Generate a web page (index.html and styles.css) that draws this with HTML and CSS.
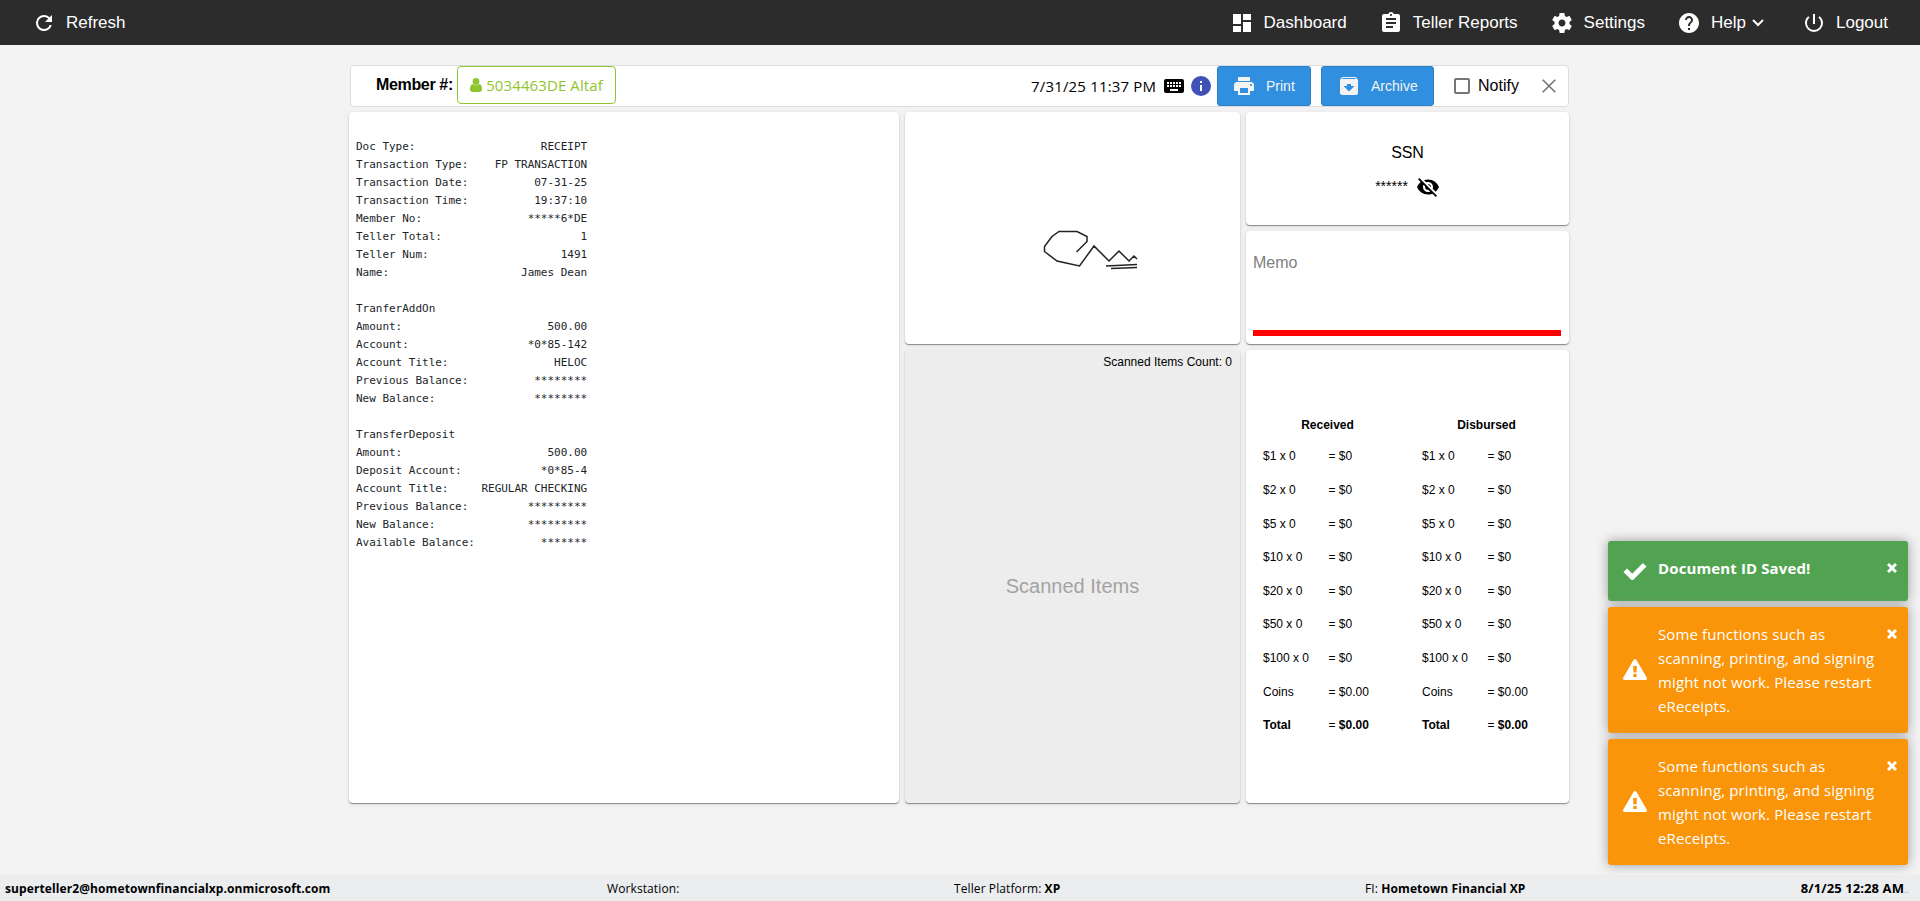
FILE: index.html
```html
<!DOCTYPE html>
<html lang="en">
  <head>
    <meta charset="UTF-8" />
    <meta name="viewport" content="width=device-width, initial-scale=1.0" />
    <title>eReceipts</title>
    <link rel="stylesheet" href="styles.css">
  </head>
  <body>
    <nav class="navbar">
      <a class="nav-item">
        <svg class="icon" viewBox="0 0 24 24"><path d="M17.65 6.35A7.96 7.96 0 0 0 12 4a8 8 0 1 0 7.73 10h-2.08A6 6 0 1 1 12 6c1.66 0 3.14.69 4.22 1.78L13 11h7V4z"/></svg>
        <span>Refresh</span>
      </a>
      <div class="nav-right">
        <a class="nav-item">
          <svg class="icon" viewBox="0 0 24 24"><path d="M3 13h8V3H3v10zm0 8h8v-6H3v6zm10 0h8V11h-8v10zm0-18v6h8V3h-8z"/></svg>
          <span>Dashboard</span>
        </a>
        <a class="nav-item">
          <svg class="icon" viewBox="0 0 24 24"><path d="M19 3h-4.18C14.4 1.84 13.3 1 12 1s-2.4.84-2.82 2H5c-1.1 0-2 .9-2 2v14c0 1.1.9 2 2 2h14c1.1 0 2-.9 2-2V5c0-1.1-.9-2-2-2zm-7 0c.55 0 1 .45 1 1s-.45 1-1 1-1-.45-1-1 .45-1 1-1zm2 14H7v-2h7v2zm3-4H7v-2h10v2zm0-4H7V7h10v2z"/></svg>
          <span>Teller Reports</span>
        </a>
        <a class="nav-item">
          <svg class="icon" viewBox="0 0 24 24"><path d="M19.43 12.98c.04-.32.07-.64.07-.98s-.03-.66-.07-.98l2.11-1.65c.19-.15.24-.42.12-.64l-2-3.46c-.12-.22-.39-.3-.61-.22l-2.49 1c-.52-.4-1.08-.73-1.69-.98l-.38-2.65A.488.488 0 0 0 14 2h-4c-.25 0-.46.18-.49.42l-.38 2.65c-.61.25-1.17.59-1.69.98l-2.49-1c-.23-.09-.49 0-.61.22l-2 3.46c-.13.22-.07.49.12.64l2.11 1.65c-.04.32-.07.65-.07.98s.03.66.07.98l-2.11 1.65c-.19.15-.24.42-.12.64l2 3.46c.12.22.39.3.61.22l2.49-1c.52.4 1.08.73 1.69.98l.38 2.65c.03.24.24.42.49.42h4c.25 0 .46-.18.49-.42l.38-2.65c.61-.25 1.17-.59 1.69-.98l2.49 1c.23.09.49 0 .61-.22l2-3.46c.12-.22.07-.49-.12-.64l-2.11-1.65zM12 15.5c-1.93 0-3.5-1.57-3.5-3.5s1.57-3.5 3.5-3.5 3.5 1.57 3.5 3.5-1.57 3.5-3.5 3.5z"/></svg>
          <span>Settings</span>
        </a>
        <a class="nav-item">
          <svg class="icon" viewBox="0 0 24 24"><path d="M12 2C6.48 2 2 6.48 2 12s4.48 10 10 10 10-4.48 10-10S17.52 2 12 2zm1 17h-2v-2h2v2zm2.07-7.75l-.9.92C13.45 12.9 13 13.5 13 15h-2v-.5c0-1.1.45-2.1 1.17-2.83l1.24-1.26c.37-.36.59-.86.59-1.41 0-1.1-.9-2-2-2s-2 .9-2 2H8c0-2.21 1.79-4 4-4s4 1.79 4 4c0 .88-.36 1.68-.93 2.25z"/></svg>
          <span>Help</span>
          <svg class="chevron" viewBox="0 0 12 8"><path d="M1 1l5 5 5-5"/></svg>
        </a>
        <a class="nav-item nav-logout">
          <svg class="icon" viewBox="0 0 24 24"><path d="M13 3h-2v10h2V3zm4.83 2.17l-1.42 1.42A6.92 6.92 0 0 1 19 12c0 3.87-3.13 7-7 7s-7-3.13-7-7c0-2.18 1.01-4.12 2.58-5.42L6.17 5.17A8.93 8.93 0 0 0 3 12a9 9 0 0 0 18 0c0-2.74-1.23-5.18-3.17-6.83z"/></svg>
          <span>Logout</span>
        </a>
      </div>
    </nav>

    <main class="content">
      <header class="toolbar">
        <label class="member-label">Member #:</label>
        <button class="member-btn">
          <svg class="user-icon" viewBox="0 0 12 14"><circle cx="6" cy="3.4" r="3.4"/><path d="M2.8 5.9A4.4 4.4 0 0 0 9.200 5.900C11.200 6.200 12 8.500 12 11c0 2-.9 3-2.300 3H2.300C.9 14 0 13 0 11c0-2.500.8-4.800 2.800-5.100z"/></svg>
          <span>5034463DE Altaf</span>
        </button>
        <div class="toolbar-right">
          <span class="doc-date">7/31/25 11:37 PM</span>
          <svg class="keyboard" viewBox="2 5 20 14"><path d="M20 5H4c-1.100 0-2 .9-2 2v10c0 1.100.9 2 2 2h16c1.100 0 2-.9 2-2V7c0-1.100-.9-2-2-2zm-9 3h2v2h-2V8zm0 3h2v2h-2v-2zM8 8h2v2H8V8zm0 3h2v2H8v-2zm-1 2H5v-2h2v2zm0-3H5V8h2v2zm9 7H8v-2h8v2zm0-4h-2v-2h2v2zm0-3h-2V8h2v2zm3 3h-2v-2h2v2zm0-3h-2V8h2v2z"/></svg>
          <svg class="info" viewBox="2 2 20 20"><circle cx="12" cy="12" r="9" fill="#fff"/><path d="M12 2a10 10 0 1 0 0 20 10 10 0 0 0 0-20zm1 15h-2v-6h2v6zm0-8h-2V7h2v2z"/></svg>
          <button class="btn btn-print">
            <svg class="icon" viewBox="0 0 24 24"><path d="M19 8H5c-1.660 0-3 1.340-3 3v6h4v4h12v-4h4v-6c0-1.660-1.340-3-3-3zm-3 11H8v-5h8v5zm3-7c-.55 0-1-.45-1-1s.45-1 1-1 1 .45 1 1-.45 1-1 1zm-1-9H6v4h12V3z"/></svg>
            <span>Print</span>
          </button>
          <button class="btn btn-archive">
            <svg class="icon" viewBox="0 0 24 24"><path d="M20.540 5.230l-1.390-1.680C18.880 3.210 18.470 3 18 3H6c-.47 0-.88.21-1.160.55L3.460 5.230C3.170 5.570 3 6.020 3 6.500V19c0 1.100.9 2 2 2h14c1.100 0 2-.9 2-2V6.500c0-.48-.17-.93-.46-1.270zM12 17.500L6.500 12H10v-2h4v2h3.500L12 17.500zM5.120 5l.81-1h12l.94 1H5.120z"/></svg>
            <span>Archive</span>
          </button>
          <span class="checkbox"></span>
          <span class="notify">Notify</span>
          <svg class="close" viewBox="0 0 14 14"><path d="M.7.7l12.600 12.600M13.300.7L.7 13.300"/></svg>
        </div>
      </header>

      <div class="panels">
        <section class="card receipt">
<pre>Doc Type:                   RECEIPT
Transaction Type:    FP TRANSACTION
Transaction Date:          07-31-25
Transaction Time:          19:37:10
Member No:                *****6*DE
Teller Total:                     1
Teller Num:                    1491
Name:                    James Dean

TranferAddOn
Amount:                      500.00
Account:                  *0*85-142
Account Title:                HELOC
Previous Balance:          ********
New Balance:               ********

TransferDeposit
Amount:                      500.00
Deposit Account:            *0*85-4
Account Title:     REGULAR CHECKING
Previous Balance:         *********
New Balance:              *********
Available Balance:          *******</pre>
        </section>

        <section class="card signature">
          <svg class="sign" viewBox="0 0 96 42">
            <path d="M33.500 22L44 11.500V6.500L34 1.500H16L9 6.500 1.500 16.500V21.500L14 31 36.500 36 51 16 66 31 76 21 86 31 91 26 94 29"/>
            <path d="M63 36L94 34.500M68 38.500L94 37.500"/>
          </svg>
        </section>

        <section class="card scanned">
          <div class="scan-count">Scanned Items Count: 0</div>
          <div class="scan-empty">Scanned Items</div>
        </section>

        <section class="card ssn">
          <div class="ssn-title">SSN</div>
          <div class="ssn-value">
            <span>******</span>
            <svg class="eye" viewBox="0 0 24 24"><path d="M12 7c2.760 0 5 2.240 5 5 0 .65-.13 1.260-.36 1.830l2.920 2.920c1.510-1.260 2.700-2.890 3.430-4.750-1.730-4.390-6-7.500-11-7.500-1.400 0-2.740.25-3.980.7l2.160 2.160C10.740 7.130 11.350 7 12 7zM2 4.270l2.280 2.280.46.46A11.800 11.800 0 0 0 1 12c1.730 4.390 6 7.500 11 7.500 1.550 0 3.030-.3 4.380-.84l.42.42L19.730 22 21 20.730 3.270 3 2 4.270zM7.530 9.800l1.550 1.550c-.05.21-.08.43-.08.65 0 1.660 1.340 3 3 3 .22 0 .44-.03.65-.08l1.550 1.550c-.67.33-1.410.53-2.200.53-2.760 0-5-2.240-5-5 0-.79.2-1.530.53-2.200zm4.310-.78l3.150 3.150.02-.16c0-1.660-1.340-3-3-3l-.17.01z"/></svg>
          </div>
        </section>

        <section class="card memo">
          <div class="memo-text">Memo</div>
        </section>

        <section class="card cash">
          <table class="cash-table">
            <tr class="cash-head"><th colspan="2">Received</th><th colspan="2">Disbursed</th></tr>
            <tr><td>$1 x 0</td><td>= $0</td><td>$1 x 0</td><td>= $0</td></tr>
            <tr><td>$2 x 0</td><td>= $0</td><td>$2 x 0</td><td>= $0</td></tr>
            <tr><td>$5 x 0</td><td>= $0</td><td>$5 x 0</td><td>= $0</td></tr>
            <tr><td>$10 x 0</td><td>= $0</td><td>$10 x 0</td><td>= $0</td></tr>
            <tr><td>$20 x 0</td><td>= $0</td><td>$20 x 0</td><td>= $0</td></tr>
            <tr><td>$50 x 0</td><td>= $0</td><td>$50 x 0</td><td>= $0</td></tr>
            <tr><td>$100 x 0</td><td>= $0</td><td>$100 x 0</td><td>= $0</td></tr>
            <tr><td>Coins</td><td>= $0.00</td><td>Coins</td><td>= $0.00</td></tr>
            <tr><td><b>Total</b></td><td>= <b>$0.00</b></td><td><b>Total</b></td><td>= <b>$0.00</b></td></tr>
          </table>
        </section>
      </div>
    </main>

    <footer class="footer">
      <div class="foot-user"><b>superteller2@hometownfinancialxp.onmicrosoft.com</b></div>
      <div class="foot-station">Workstation:</div>
      <div class="foot-platform">Teller Platform: <b>XP</b></div>
      <div class="foot-fi">FI: <b>Hometown Financial XP</b></div>
      <div class="foot-time"><b>8/1/25 12:28 AM</b><span class="dots">..</span></div>
    </footer>

    <div class="toasts">
      <div class="toast success">
        <svg class="toast-icon" viewBox="0 0 24 18"><path d="M2.300 8.300l7 7L21.700 2.700" fill="none" stroke="#fff" stroke-width="5"/></svg>
        <div class="toast-text"><b>Document ID Saved!</b></div>
        <svg class="toast-close" viewBox="0 0 10 10"><path d="M1 1l8 8M9 1L1 9"/></svg>
      </div>
      <div class="toast warning">
        <svg class="toast-icon" viewBox="0 0 24 21"><path fill="#fff" fill-rule="evenodd" d="M10.500 1Q12-.9 13.500 1L23.700 18.600Q24.600 21 22.200 21H1.800Q-.6 21 .3 18.600zM10.100 7l.4 6.500h3L13.900 7zM10.300 15v3h3.400v-3z"/></svg>
        <div class="toast-text">Some functions such as scanning, printing, and signing might not work. Please restart eReceipts.</div>
        <svg class="toast-close" viewBox="0 0 10 10"><path d="M1 1l8 8M9 1L1 9"/></svg>
      </div>
      <div class="toast warning">
        <svg class="toast-icon" viewBox="0 0 24 21"><path fill="#fff" fill-rule="evenodd" d="M10.500 1Q12-.9 13.500 1L23.700 18.600Q24.600 21 22.200 21H1.800Q-.6 21 .3 18.600zM10.100 7l.4 6.500h3L13.900 7zM10.300 15v3h3.400v-3z"/></svg>
        <div class="toast-text">Some functions such as scanning, printing, and signing might not work. Please restart eReceipts.</div>
        <svg class="toast-close" viewBox="0 0 10 10"><path d="M1 1l8 8M9 1L1 9"/></svg>
      </div>
    </div>
  </body>
</html>
```
FILE: styles.css
```css
* {
  box-sizing: border-box;
}

body {
  margin: 0;
  height: 100vh;
  display: flex;
  flex-direction: column;
  background: #f3f3f3;
  color: #000;
  font-family: "Liberation Sans", Arial, sans-serif;
  font-size: 16px;
  overflow: hidden;
}

svg {
  display: block;
  flex: none;
}

button {
  font-family: inherit;
  margin: 0;
}

.icon {
  width: 24px;
  height: 24px;
  fill: currentColor;
}

/* top bar */
.navbar {
  height: 45px;
  flex: none;
  padding: 0 16px;
  display: flex;
  align-items: center;
  justify-content: space-between;
  background: #2c2c2c;
  color: #fff;
  font-size: 17px;
}

.nav-right {
  display: flex;
}

.nav-item {
  display: flex;
  align-items: center;
  gap: 10px;
  padding: 0 16px;
}

.nav-logout {
  margin-left: 6px;
}

.chevron {
  width: 12px;
  height: 8px;
  margin-left: -4px;
  fill: none;
  stroke: #fff;
  stroke-width: 2;
}

/* member toolbar */
.content {
  flex: 1;
  width: 1220px;
  margin: 20px 0 0 349px;
}

.toolbar {
  height: 42px;
  margin-left: 1px;
  padding-left: 25px;
  display: flex;
  align-items: flex-start;
  border: 1px solid #ddd;
  border-radius: 4px;
  background: #fff;
}

.member-label {
  width: 81px;
  line-height: 37px;
  font-weight: bold;
  letter-spacing: -0.35px;
}

.member-btn {
  width: 159px;
  height: 38px;
  padding: 0;
  display: flex;
  align-items: center;
  justify-content: center;
  gap: 4px;
  border: 1px solid #8fc52f;
  border-radius: 4px;
  background: #fff;
  color: #8fc52f;
  font-family: "Open Sans", sans-serif;
  font-size: 15px;
  letter-spacing: 0.1px;
}

.user-icon {
  width: 12px;
  height: 14px;
  fill: currentColor;
}

.toolbar-right {
  height: 40px;
  margin-left: auto;
  display: flex;
  align-items: center;
}

.doc-date {
  width: 133px;
  font-family: "Open Sans", sans-serif;
  font-size: 15px;
  letter-spacing: 0.17px;
}

.keyboard {
  width: 20px;
  height: 14px;
  margin-right: 7px;
}

.info {
  width: 20px;
  height: 20px;
  margin-right: 6px;
  fill: #3f51b5;
}

.btn {
  height: 40px;
  padding: 0 0 0 14px;
  display: flex;
  align-items: center;
  border: 1px solid #2a80c8;
  border-radius: 3px;
  background: #308fdf;
  color: #f3f3f3;
  font-size: 14px;
}

.btn-print {
  width: 94px;
  gap: 10px;
}

.btn-archive {
  width: 113px;
  margin-left: 10px;
  padding-left: 15px;
  gap: 10px;
}

.checkbox {
  width: 16px;
  height: 16px;
  margin-left: 20px;
  border: 2px solid #757575;
  border-radius: 2px;
}

.notify {
  width: 64px;
  margin-left: 8px;
}

.close {
  width: 14px;
  height: 14px;
  margin-right: 12px;
  stroke: #757575;
  stroke-width: 1.6;
}

/* panels */
.panels {
  margin-top: 5px;
  display: grid;
  grid-template-columns: 550px 335px 323px;
  grid-template-rows: 113px 113px 453px;
  gap: 6px;
}

.card {
  border-radius: 4px;
  background: #fff;
  box-shadow: 0 1px 1px rgba(0, 0, 0, 0.4), 0 1px 4px rgba(0, 0, 0, 0.1);
}

.receipt {
  grid-row: 1 / 4;
  padding: 26px 7px;
}

.receipt pre {
  margin: 0;
  color: #212529;
  font-family: "DejaVu Sans Mono", monospace;
  font-size: 11px;
  line-height: 18px;
  letter-spacing: -0.02px;
}

.signature {
  grid-column: 2;
  grid-row: 1 / 3;
  padding: 118px 0 0 138px;
}

.sign {
  width: 96px;
  height: 42px;
  fill: none;
  stroke: #222;
  stroke-width: 1.5;
}

.scanned {
  grid-column: 2;
  grid-row: 3;
  display: flex;
  flex-direction: column;
  background: #ededed;
}

.scan-count {
  padding: 5px 8px 0 0;
  text-align: right;
  font-size: 12px;
}

.scan-empty {
  flex: 1;
  display: flex;
  align-items: center;
  justify-content: center;
  color: #a3a3a3;
  font-size: 20px;
}

.ssn {
  grid-column: 3;
  grid-row: 1;
  padding-top: 32px;
  text-align: center;
}

.ssn-title {
  letter-spacing: -0.2px;
}

.ssn-value {
  margin-top: 12px;
  display: flex;
  justify-content: center;
  gap: 8px;
  font-size: 14px;
  line-height: 24px;
}

.eye {
  width: 24px;
  height: 24px;
  margin-top: 1px;
}

.memo {
  grid-column: 3;
  grid-row: 2;
  padding: 23px 8px 8px 7px;
}

.memo-text {
  height: 82px;
  border-bottom: 6px solid red;
  color: #808080;
}

.cash {
  grid-column: 3;
  grid-row: 3;
  padding: 60px 0 0 2px;
}

.cash-table {
  width: 318px;
  table-layout: fixed;
  border-collapse: collapse;
  font-size: 12px;
}

.cash-table tr {
  height: 33.6px;
}

.cash-table .cash-head {
  height: 29.6px;
}

.cash-table td,
.cash-table th {
  padding: 0;
}

.cash-table td {
  padding-left: 15px;
}

.cash-table td:nth-child(even) {
  padding-left: 1px;
}

/* status line */
.footer {
  height: 26px;
  flex: none;
  padding: 0 11px 0 5px;
  display: flex;
  align-items: center;
  background: #ebedef;
  font-family: "Open Sans", sans-serif;
  font-size: 12px;
  letter-spacing: 0.1px;
  white-space: nowrap;
}

.foot-user {
  width: 602px;
}

.foot-station {
  width: 347px;
}

.foot-platform {
  width: 411px;
}

.foot-time {
  margin-left: auto;
  font-size: 13px;
}

.dots {
  color: #999;
  font-size: 9px;
}

/* notifications */
.toasts {
  position: absolute;
  right: 12px;
  bottom: 36px;
  width: 300px;
  display: flex;
  flex-direction: column;
  gap: 6px;
}

.toast {
  min-height: 60px;
  padding: 15px 11px 15px 15px;
  display: flex;
  align-items: center;
  border-radius: 3px;
  box-shadow: 0 0 12px #999;
  color: #fff;
  font-family: "Open Sans", sans-serif;
  font-size: 15px;
  line-height: 24px;
  letter-spacing: 0.12px;
}

.success {
  background: #51a351;
}

.warning {
  background: #fa9408;
}

.toast-icon {
  width: 24px;
  margin-right: 11px;
}

.warning .toast-icon {
  margin-bottom: 1px;
}

.toast-text {
  flex: 1;
  align-self: flex-start;
}

.toast-close {
  width: 10px;
  height: 10px;
  margin-top: 7px;
  align-self: flex-start;
  stroke: #fff;
  stroke-width: 3;
}
```
